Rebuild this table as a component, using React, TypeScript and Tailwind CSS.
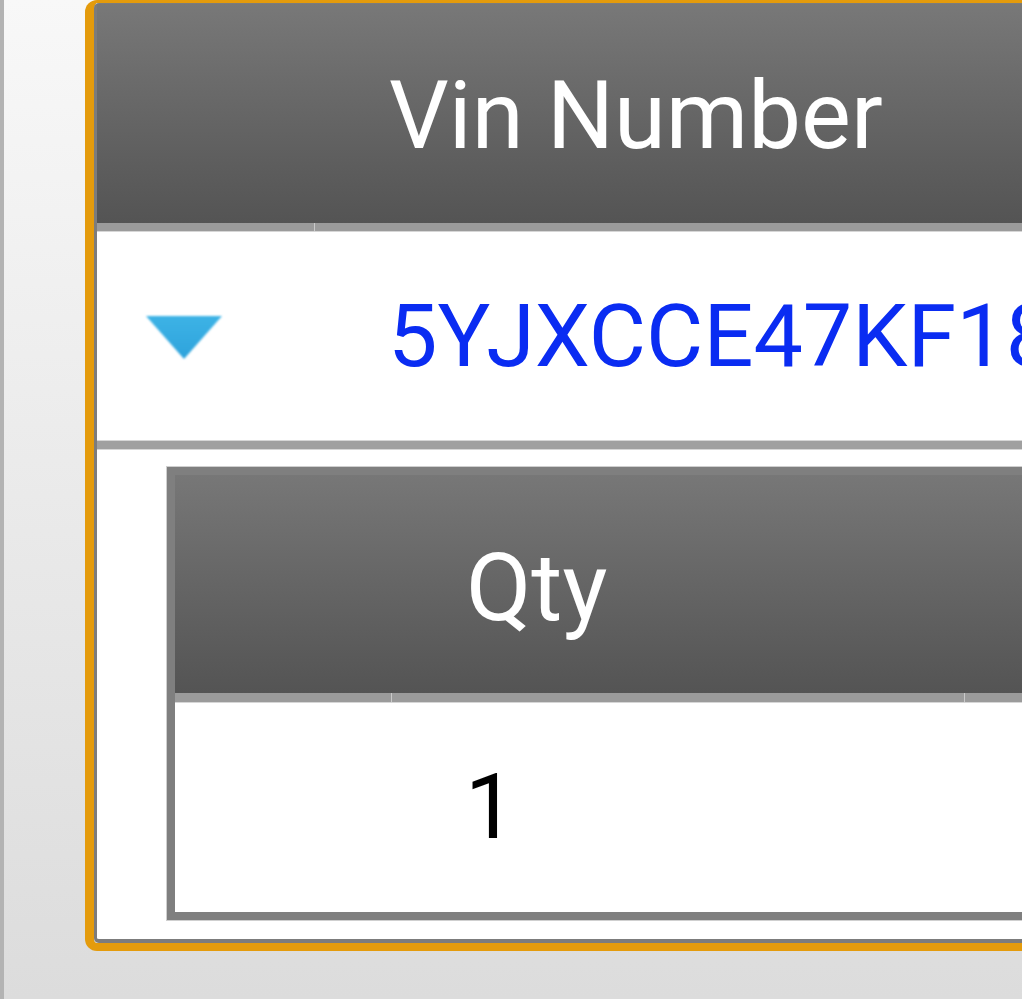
import React from 'react';

const font = "font-['Roboto','Noto_Sans',sans-serif]";

function ExpandArrow() {
  return (
    <svg width="80" height="48" viewBox="0 0 80 48" className="blur-[0.8px]">
      <defs>
        <linearGradient id="arrowFill" x1="0" y1="0" x2="0" y2="1">
          <stop offset="0" stopColor="#3db3e6" />
          <stop offset="1" stopColor="#2ea3dc" />
        </linearGradient>
      </defs>
      <polygon points="2,3 78,3 40,46" fill="url(#arrowFill)" />
    </svg>
  );
}

export default function App() {
  return (
    <div
      className={`flex h-[999px] w-[1022px] overflow-hidden bg-gradient-to-b from-[#f8f8f8] to-[#dcdcdc] ${font}`}
    >
      {/* left edge of the page */}
      <div className="w-[4px] shrink-0 bg-[#b3b3b3]" />

      {/* orange framed panel */}
      <div className="ml-[81px] w-[1600px] shrink-0 self-start rounded-[12px] border-t-[3px] border-b-[8px] border-l-[9px] border-[#e49b0c]">
        <div className="rounded-[5px] border-t-[1px] border-b-[4px] border-l-[3px] border-[#7c7c7c] bg-white">
          {/* header */}
          <div className="flex h-[219px] bg-gradient-to-b from-[#787878] to-[#545454]">
            <div className="w-[218px] shrink-0" />
            <div className="flex items-center pt-[5px] pl-[74px] text-[94px] leading-none text-white">
              Vin Number
            </div>
          </div>
          <div className="flex h-[9px] border-b border-[#d6d6d6] bg-[#9b9b9b]">
            <div className="w-[218px] shrink-0 border-r border-[#c9c9c9]" />
          </div>

          {/* master row */}
          <div className="flex h-[208px] items-center">
            <div className="flex w-[218px] shrink-0 items-center pl-[47px] pt-[2px]">
              <ExpandArrow />
            </div>
            <div className="whitespace-nowrap pl-[73px] text-[88px] leading-none text-[#0a2cf2]">
              5YJXCCE47KF18
            </div>
          </div>
          <div className="h-[10px] border-y border-[#d6d6d6] bg-[#a0a0a0]" />

          {/* detail table */}
          <div className="pt-[17px] pb-[19px] pl-[70px]">
            <div className="border-[8px] border-r-0 border-[#7f7f7f] bg-white outline outline-1 outline-[#cfcfcf]">
              <div className="flex h-[218px] bg-gradient-to-b from-[#777777] to-[#545454]">
                <div className="w-[217px] shrink-0" />
                <div className="flex items-center pt-[6px] pl-[74px] text-[95px] leading-none text-white">
                  Qty
                </div>
              </div>
              <div className="flex h-[10px] border-b border-[#d6d6d6] bg-[#9b9b9b]">
                <div className="w-[217px] shrink-0 border-r border-[#c9c9c9]" />
                <div className="w-[573px] shrink-0 border-r border-[#c9c9c9]" />
              </div>
              <div className="flex h-[209px] items-center">
                <div className="w-[217px] shrink-0" />
                <div className="pl-[73px] text-[90px] leading-none text-black">1</div>
              </div>
            </div>
          </div>
        </div>
      </div>
    </div>
  );
}
